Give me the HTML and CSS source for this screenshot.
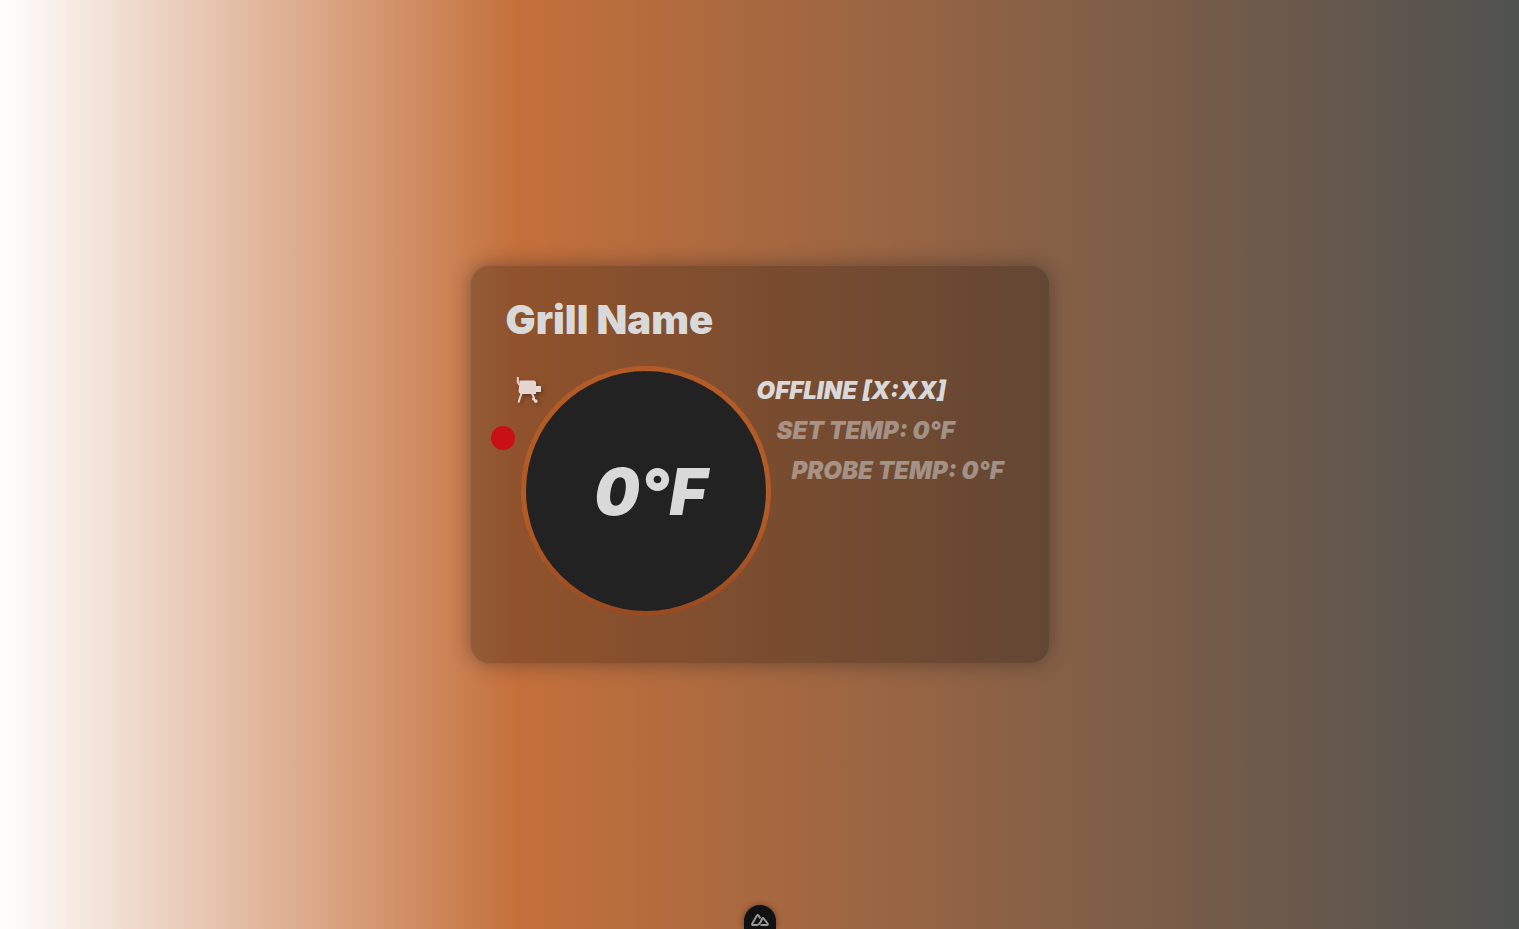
FILE: index.html
```html
<!DOCTYPE html>
<html lang="en">
<head>
<meta charset="utf-8">
<meta name="viewport" content="width=device-width, initial-scale=1">
<title>Grill Name</title>
<link rel="stylesheet" href="styles.css">
</head>
<body>
<main class="page">
  <section class="card">
    <h1 class="name">Grill Name</h1>
    <div class="body">
      <div class="indicators">
        <svg class="grill" viewBox="0 0 26 28" role="img" aria-label="Grill">
          <path class="fill" d="M3.500 4.500H18.500L20 6V10H25V16H20V18H4.500L2.500 16Z"/>
          <path d="M1.800 1V7.500M2.500 7.500L3.500 9M5.800 17L4 21.500L2.500 26.500M16 17.500L18 21.500L17.500 23.500L20.500 25"/>
          <circle class="fill" cx="17.500" cy="22.800" r="1.500"/>
          <circle class="fill" cx="19.800" cy="25.200" r="1.700"/>
        </svg>
        <span class="status" role="img" aria-label="Offline"></span>
      </div>
      <div class="dial">0°F</div>
      <div class="readings">
        <p class="reading current">OFFLINE [X:XX]</p>
        <p class="reading set">SET TEMP: 0°F</p>
        <p class="reading probe">PROBE TEMP: 0°F</p>
      </div>
    </div>
  </section>
  <button class="devtools" type="button" aria-label="Open developer tools">
    <svg viewBox="0 0 18 12" aria-hidden="true"><path d="M6 11H2.200Q.6 11 1.300 9.500L6 1.600Q6.800.5 7.600 1.600L9.300 4.500M6 11Q8 11 9.300 8.500L11.300 4.500Q12 3.300 12.700 4.500L16.600 9.500Q17.300 11 15.800 11H9.500"/></svg>
  </button>
</main>
</body>
</html>
```
FILE: styles.css
```css
* {
  box-sizing: border-box;
}

body {
  margin: 0;
  font-family: Inter, "Liberation Sans", sans-serif;
  color: #d9d9d9;
}

.page {
  min-height: 100vh;
  display: grid;
  place-items: center;
  background: linear-gradient(90deg, #fff 0%, #c4703b 34%, #505250 100%);
}

.card {
  width: 580px;
  max-width: 100%;
  padding: 29px 20px 47px;
  border: 1px solid rgba(255, 255, 255, 0.08);
  border-radius: 20px;
  background: rgba(5, 5, 5, 0.27);
  box-shadow: 0 0 20px rgba(30, 30, 30, 0.4);
}

.name {
  margin: 0 0 21px 15px;
  font-size: 40px;
  line-height: 50px;
  font-weight: 900;
}

.body {
  display: grid;
  grid-template-columns: 30px 250px 1fr;
}

.indicators {
  display: flex;
  flex-direction: column;
  gap: 22px;
  padding-top: 10px;
}

.grill {
  width: 26px;
  height: 28px;
  align-self: flex-end;
  margin-right: -21px;
  fill: none;
  stroke: #e5d6cf;
  stroke-width: 2;
  filter: drop-shadow(2px 2px 2px rgba(0, 0, 0, 0.3));
}

.grill .fill {
  fill: #e5d6cf;
  stroke: none;
}

.status {
  width: 24px;
  height: 24px;
  border-radius: 50%;
  background: #c91115;
}

.dial {
  height: 250px;
  display: grid;
  place-items: center;
  padding-left: 10px;
  border: 5px solid transparent;
  border-radius: 50%;
  background:
    linear-gradient(#222, #222) padding-box,
    linear-gradient(#b35b26 60%, #984a20) border-box;
  font-size: 64px;
  font-style: oblique 14deg;
  font-weight: 900;
}

.readings {
  padding-top: 5px;
  font-size: 24px;
  font-style: oblique 14deg;
  font-weight: 900;
  line-height: 40px;
  white-space: nowrap;
}

.reading {
  margin: 0;
  color: rgba(217, 217, 217, 0.5);
}

.current {
  color: #d9d9d9;
  margin-left: -14px;
}

.set {
  margin-left: 6px;
}

.probe {
  margin-left: 21px;
}

.devtools {
  position: fixed;
  bottom: 0;
  left: 50%;
  width: 32px;
  height: 24px;
  margin-left: -16px;
  padding: 6px 0 0;
  display: grid;
  place-items: center;
  border: 0;
  border-radius: 16px 16px 0 0;
  background: #111;
  box-shadow: 0 0 6px rgba(0, 0, 0, 0.4);
}

.devtools svg {
  width: 18px;
  height: 12px;
  fill: none;
  stroke: #999;
  stroke-width: 2;
}
```
